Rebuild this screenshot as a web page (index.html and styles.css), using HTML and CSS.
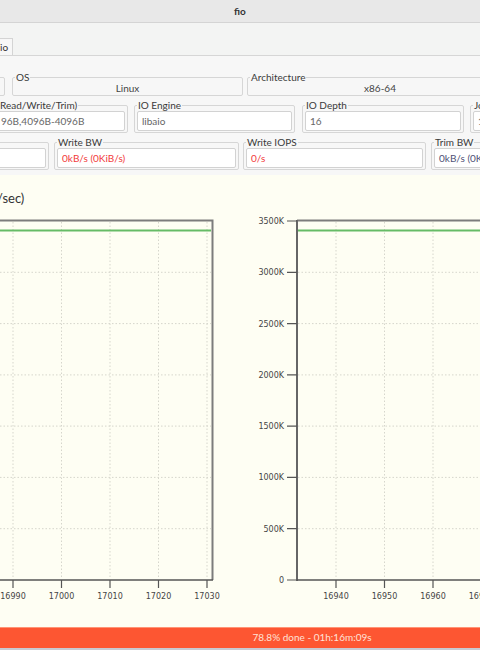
FILE: index.html
```
<!DOCTYPE html>
<html>
<head>
<meta charset="utf-8">
<link rel="stylesheet" href="styles.css">
</head>
<body>
<div class="window">
  <div class="titlebar">fio</div>
  <div class="tabstrip">
    <div class="tab">io</div>
  </div>
  <div class="panel">
    <div class="row">
      <fieldset class="frame w-r1a"><legend class="empty"></legend><div class="value"></div></fieldset>
      <fieldset class="frame w-os"><legend>OS</legend><div class="value">Linux</div></fieldset>
      <fieldset class="frame w-arch"><legend>Architecture</legend><div class="value">x86-64</div></fieldset>
    </div>
    <div class="row">
      <fieldset class="frame w-bs"><legend class="lg-shift">Read/Write/Trim)</legend><div class="entry ent-shift">96B,4096B-4096B</div></fieldset>
      <fieldset class="frame w-eng"><legend>IO Engine</legend><div class="entry">libaio</div></fieldset>
      <fieldset class="frame w-depth"><legend>IO Depth</legend><div class="entry">16</div></fieldset>
      <fieldset class="frame w-jobs"><legend>Jobs</legend><div class="entry">1</div></fieldset>
    </div>
    <div class="row">
      <fieldset class="frame w-r3a"><legend class="empty"></legend><div class="entry"></div></fieldset>
      <fieldset class="frame w-wbw"><legend>Write BW</legend><div class="entry red">0kB/s (0KiB/s)</div></fieldset>
      <fieldset class="frame w-wiops"><legend>Write IOPS</legend><div class="entry red">0/s</div></fieldset>
      <fieldset class="frame w-tbw"><legend>Trim BW</legend><div class="entry blue">0kB/s (0KiB/s)</div></fieldset>
    </div>
  </div>
  <div class="charts">
    <div class="chart-title">/sec)</div>
    <svg class="plot" width="480" height="421" viewBox="0 206 480 421">
      <g stroke="#d6d6cc" stroke-width="1" stroke-dasharray="1.5 2" fill="none">
        <path d="M0 272.3H211M0 323.6H211M0 374.9H211M0 426.1H211M0 477.4H211M0 528.7H211"/>
        <path d="M298 272.3H480M298 323.6H480M298 374.9H480M298 426.1H480M298 477.4H480M298 528.7H480"/>
        <path d="M13 222V579M61.5 222V579M110 222V579M158.5 222V579M207 222V579"/>
        <path d="M336 222V579M384.5 222V579M433 222V579"/>
      </g>
      <g stroke="#66bb66" stroke-width="2" fill="none">
        <path d="M0 230.5H211"/>
        <path d="M298 230.5H480"/>
      </g>
      <g fill="none">
        <path d="M0 220.5H212.5V580" stroke="#7c7c7c" stroke-width="2"/>
        <path d="M0 580H213" stroke="#555" stroke-width="1.6"/>
        <path d="M297 220.5H480" stroke="#7c7c7c" stroke-width="2"/>
        <path d="M297 220V581" stroke="#666" stroke-width="2"/>
        <path d="M297 580H480" stroke="#555" stroke-width="1.6"/>
        <g stroke="#555" stroke-width="1.2">
          <path d="M13 580V588M61.5 580V588M110 580V588M158.5 580V588M207 580V588"/>
          <path d="M336 580V588M384.5 580V588M433 580V588M481.5 580V588"/>
          <path d="M287 221H297M287 272.3H297M287 323.6H297M287 374.9H297M287 426.1H297M287 477.4H297M287 528.7H297M287 580H297"/>
        </g>
      </g>
      <g class="ticklabel" text-anchor="middle">
        <text x="13" y="599">16990</text>
        <text x="61.5" y="599">17000</text>
        <text x="110" y="599">17010</text>
        <text x="158.5" y="599">17020</text>
        <text x="207" y="599">17030</text>
        <text x="336" y="599">16940</text>
        <text x="384.5" y="599">16950</text>
        <text x="433" y="599">16960</text>
        <text x="481.5" y="599">16970</text>
      </g>
      <g class="ticklabel" text-anchor="end">
        <text x="284" y="224">3500K</text>
        <text x="284" y="275.3">3000K</text>
        <text x="284" y="326.6">2500K</text>
        <text x="284" y="377.9">2000K</text>
        <text x="284" y="429.1">1500K</text>
        <text x="284" y="480.4">1000K</text>
        <text x="284" y="531.7">500K</text>
        <text x="284" y="583">0</text>
      </g>
    </svg>
  </div>
  <div class="progress">78.8% done - 01h:16m:09s</div>
  <div class="bottomstrip"></div>
</div>
</body>
</html>
```
FILE: styles.css
```
* { box-sizing: border-box; }
html, body {
  margin: 0;
  padding: 0;
}
body {
  width: 480px;
  height: 650px;
  overflow: hidden;
  font-family: "Lato", "Liberation Sans", sans-serif;
  font-size: 10px;
  color: #3a3a3a;
  background: #f6f6f6;
}
.window {
  width: 480px;
  height: 650px;
  overflow: hidden;
  display: flex;
  flex-direction: column;
}
.titlebar {
  height: 23px;
  flex: none;
  background: #e8e8e8;
  border-bottom: 1px solid #d4d4d4;
  text-align: center;
  font-weight: bold;
  line-height: 22px;
  color: #333;
}
.tabstrip {
  height: 33px;
  flex: none;
  background: #f3f4f3;
  border-bottom: 1px solid #d6d6d6;
  padding-top: 15px;
  display: flex;
}
.tab {
  width: 18px;
  height: 17px;
  margin-left: -5px;
  border: 1px solid #d4d4d4;
  border-bottom: none;
  background: #f7f7f7;
  line-height: 17px;
  padding-left: 4px;
  color: #333;
}
.panel {
  height: 119px;
  flex: none;
  background: #f7f7f7;
  padding-top: 16px;
  display: flex;
  flex-direction: column;
  gap: 4px;
}
.row {
  display: flex;
  flex: none;
}
.frame {
  flex: none;
  margin: 0;
  min-width: 0;
  padding: 0 2px 1px;
  border: 1px solid #d6d6d6;
  border-radius: 2px;
}
.frame legend {
  padding: 0 1px;
  margin-left: 0;
  line-height: 11px;
  height: 11px;
  color: #3a3a3a;
}
.frame legend.empty { padding: 0; width: 0; }
.lg-shift { margin-left: 16px !important; }
.value {
  text-align: center;
  line-height: 11px;
  height: 11px;
  color: #444;
}
.entry {
  height: 20px;
  border: 1px solid #d2d2d2;
  border-radius: 2px;
  background: #fff;
  line-height: 18px;
  padding-left: 4px;
  color: #666;
  white-space: nowrap;
  overflow: hidden;
}
.ent-shift { padding-left: 17px; }
.red { color: #f23b3b; }
.blue { color: #4e5075; }

.w-r1a { width: 25px; margin-left: -20px; }
.w-os { width: 231px; margin-left: 7px; }
.w-arch { width: 266px; margin-left: 4px; }
.w-bs { width: 148px; margin-left: -20px; }
.w-eng { width: 161px; margin-left: 6px; }
.w-depth { width: 162px; margin-left: 7px; }
.w-jobs { width: 40px; margin-left: 6px; }
.w-r3a { width: 69px; margin-left: -20px; }
.w-wbw { width: 185px; margin-left: 5px; }
.w-wiops { width: 183px; margin-left: 4px; }
.w-tbw { width: 90px; margin-left: 5px; }

.charts {
  height: 452px;
  flex: none;
  background: #fefef3;
  padding-top: 15px;
  overflow: hidden;
}
.chart-title {
  font-size: 13px;
  line-height: 16px;
  height: 16px;
  margin-left: -3px;
  color: #333;
}
.plot { display: block; }
.ticklabel {
  font-family: "DejaVu Sans", sans-serif;
  font-size: 8px;
  fill: #454545;
}
.progress {
  height: 21px;
  flex: none;
  background: #fd5632;
  border-top: 1px solid #ff9475;
  color: #ffe2d8;
  text-align: center;
  padding-left: 144px;
  line-height: 19px;
}
.bottomstrip {
  height: 2px;
  flex: none;
  background: #c8c9d1;
}
```
